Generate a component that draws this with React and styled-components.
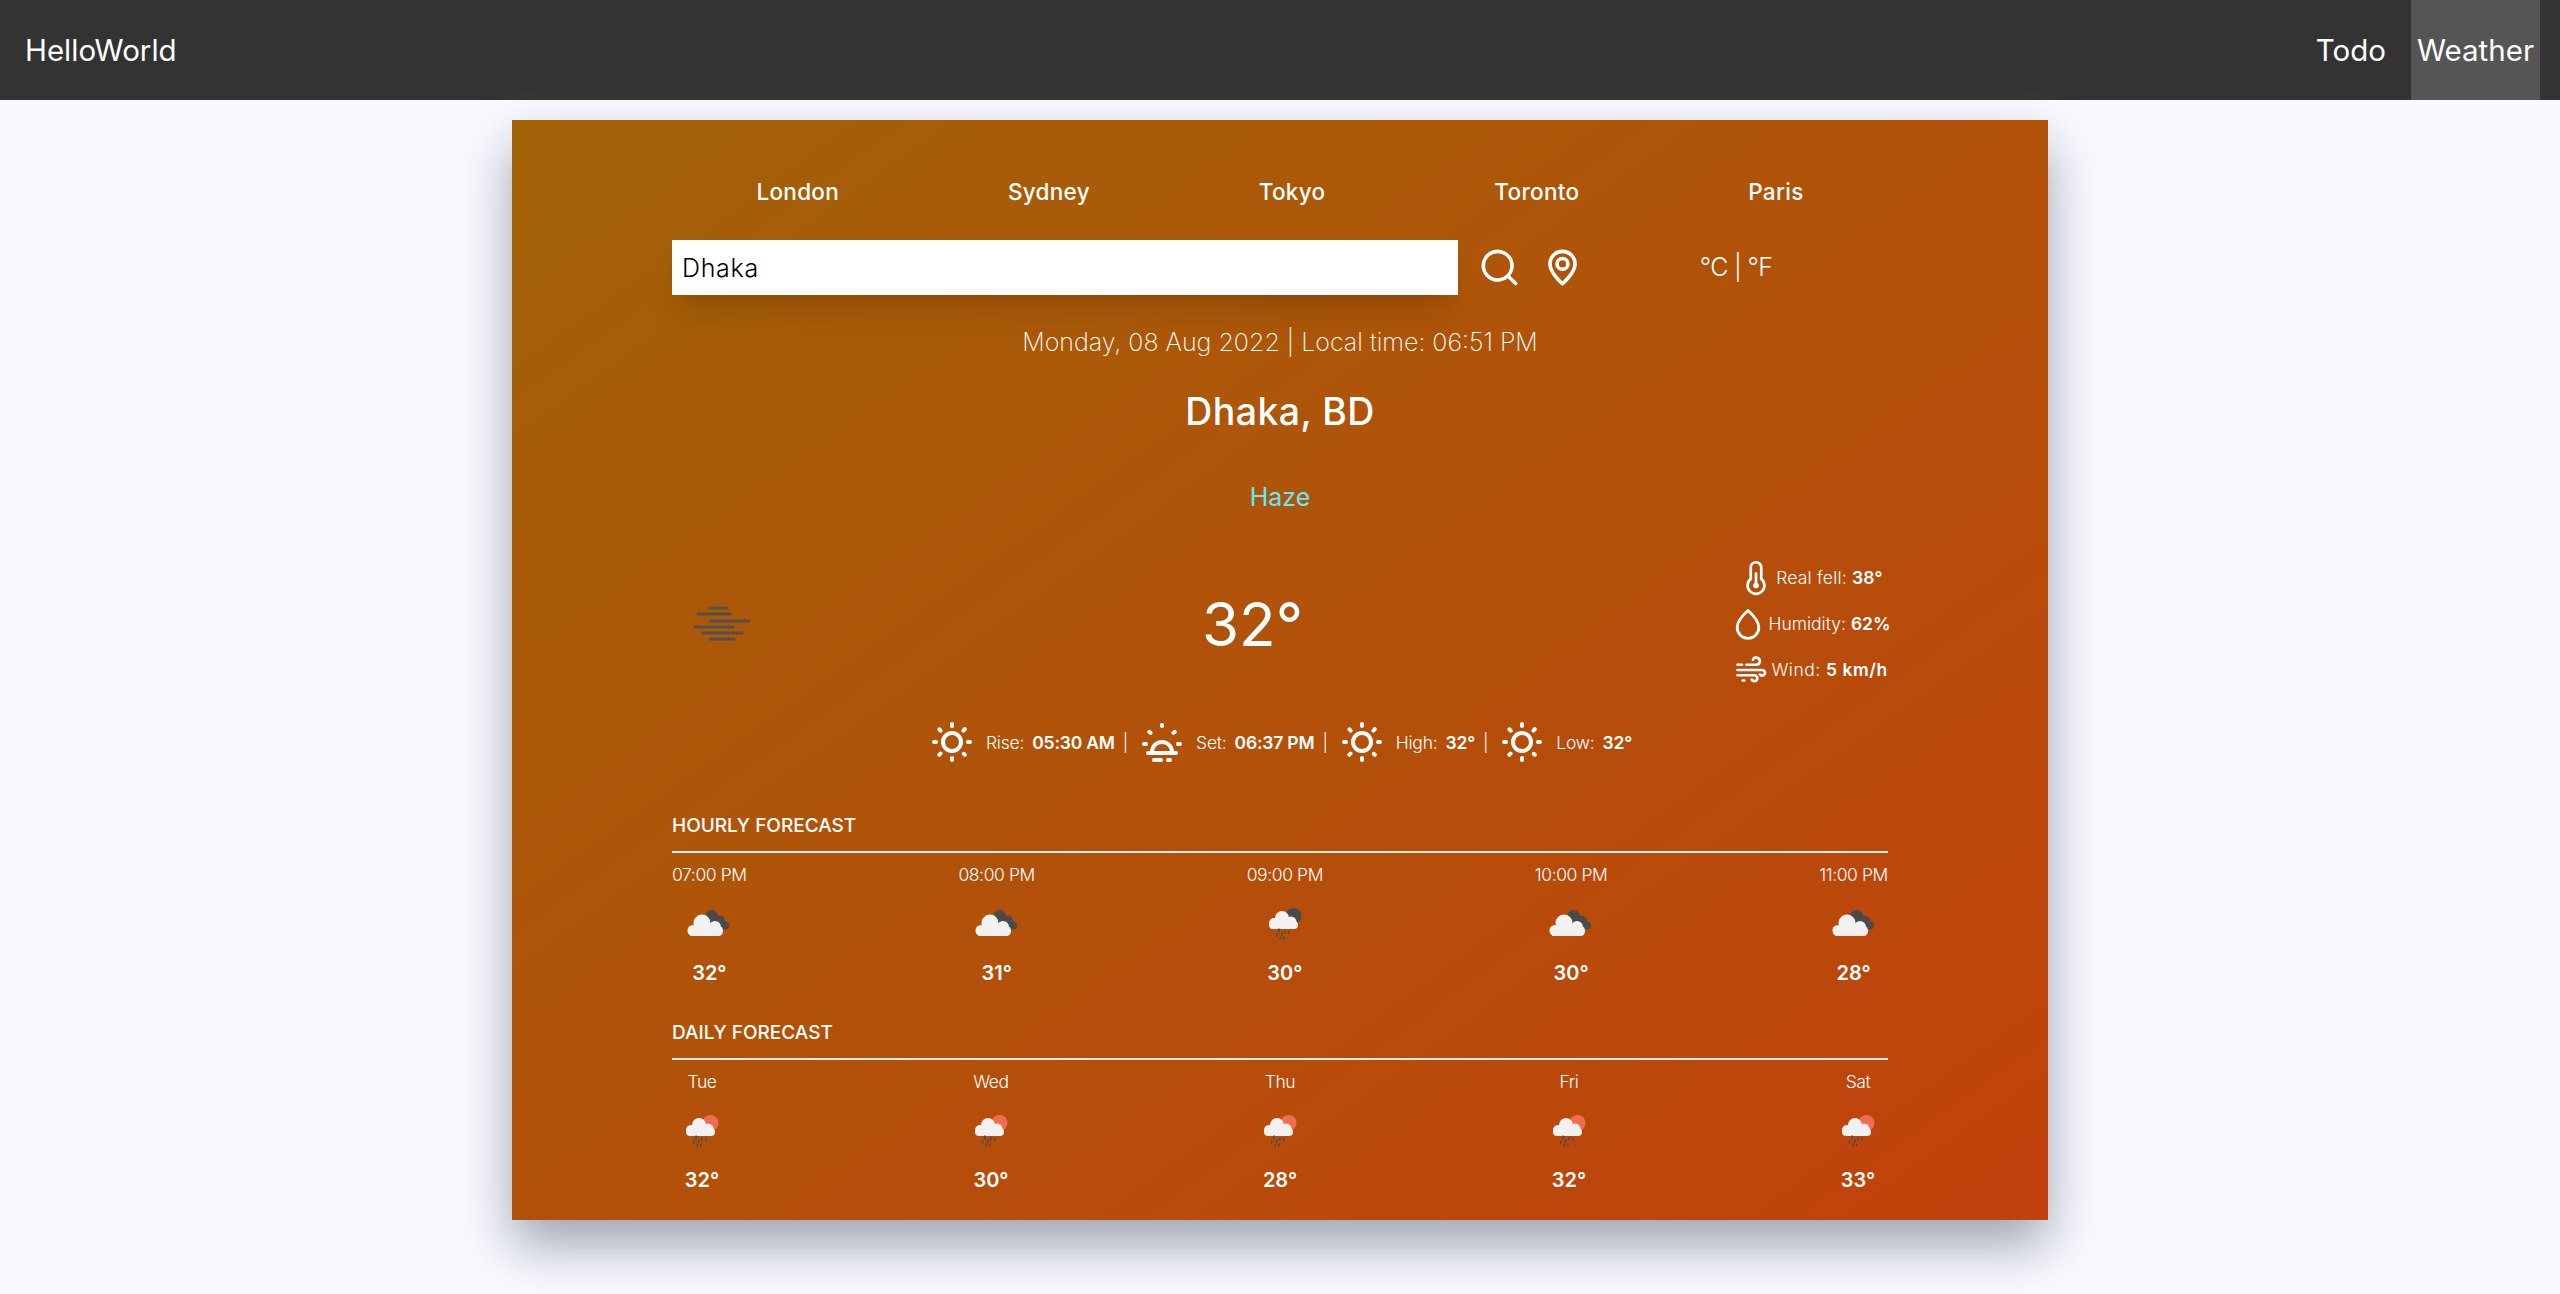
import styled, { createGlobalStyle } from "styled-components";

const GlobalStyle = createGlobalStyle`
  * { box-sizing: border-box; }
  html, body, #root { margin: 0; padding: 0; min-height: 100vh; }
  body {
    background: #f9faff;
    font-family: "Inter", "Open Sans", sans-serif;
    color: #fff;
  }
  #root { overflow: visible; display: flow-root; }
`;

const hourly = [
  { label: "07:00 PM", temp: "32°", icon: "cloud" },
  { label: "08:00 PM", temp: "31°", icon: "cloud" },
  { label: "09:00 PM", temp: "30°", icon: "rain" },
  { label: "10:00 PM", temp: "30°", icon: "cloud" },
  { label: "11:00 PM", temp: "28°", icon: "cloud" },
];

const daily = [
  { label: "Tue", temp: "32°", icon: "sun" },
  { label: "Wed", temp: "30°", icon: "sun" },
  { label: "Thu", temp: "28°", icon: "sun" },
  { label: "Fri", temp: "32°", icon: "sun" },
  { label: "Sat", temp: "33°", icon: "sun" },
];

const cities = ["London", "Sydney", "Tokyo", "Toronto", "Paris"];

// outline icons, all on a 24 grid
const SearchIcon = () => (
  <svg width="43" height="43" viewBox="0 0 24 24" fill="#fff">
    <path d="M21.71,20.29,18,16.61A9,9,0,1,0,16.61,18l3.68,3.68a1,1,0,0,0,1.42,0A1,1,0,0,0,21.71,20.29ZM11,18a7,7,0,1,1,7-7A7,7,0,0,1,11,18Z" />
  </svg>
);

const LocationIcon = () => (
  <svg width="43" height="43" viewBox="0 0 24 24" fill="#fff">
    <path d="M12,2a8,8,0,0,0-8,8c0,5.4,7.05,11.5,7.35,11.76a1,1,0,0,0,1.3,0C13,21.5,20,15.4,20,10A8,8,0,0,0,12,2Zm0,17.65c-2.13-2-6-6.31-6-9.65a6,6,0,0,1,12,0C18,13.34,14.13,17.66,12,19.65ZM12,6a4,4,0,1,0,4,4A4,4,0,0,0,12,6Zm0,6a2,2,0,1,1,2-2A2,2,0,0,1,12,12Z" />
  </svg>
);

const SunIcon = () => (
  <svg width="48" height="48" viewBox="0 0 24 24" fill="#fff">
    <path d="M5.64,17l-.71.71a1,1,0,0,0,0,1.41,1,1,0,0,0,1.41,0l.71-.71A1,1,0,0,0,5.64,17ZM5,12a1,1,0,0,0-1-1H3a1,1,0,0,0,0,2H4A1,1,0,0,0,5,12Zm7-7a1,1,0,0,0,1-1V3a1,1,0,0,0-2,0V4A1,1,0,0,0,12,5ZM5.64,7.05a1,1,0,0,0,.7.29,1,1,0,0,0,.71-.29,1,1,0,0,0,0-1.41l-.71-.71A1,1,0,0,0,4.93,6.34Zm12,.29a1,1,0,0,0,.7-.29l.71-.71a1,1,0,1,0-1.41-1.41L17,5.64a1,1,0,0,0,0,1.41A1,1,0,0,0,17.66,7.34ZM21,11H20a1,1,0,0,0,0,2h1a1,1,0,0,0,0-2Zm-9,8a1,1,0,0,0-1,1v1a1,1,0,0,0,2,0V20A1,1,0,0,0,12,19ZM18.36,17A1,1,0,0,0,17,18.36l.71.71a1,1,0,0,0,1.41,0,1,1,0,0,0,0-1.41ZM12,6.5A5.5,5.5,0,1,0,17.5,12,5.51,5.51,0,0,0,12,6.5Zm0,9A3.5,3.5,0,1,1,15.5,12,3.5,3.5,0,0,1,12,15.5Z" />
  </svg>
);

const SunsetIcon = () => (
  <svg width="48" height="48" viewBox="0 0 24 24" fill="none" stroke="#fff" strokeWidth="2" strokeLinecap="round">
    <path d="M7 17a5 5 0 0 1 10 0" />
    <path d="M5 17.5h14" />
    <path d="M8 21h3.5M15 21h1" />
    <path d="M12 3.5v.5M3 13h1M20 13h1M5.6 6.9l.7.5M18.4 6.9l-.7.5" />
  </svg>
);

const ThermometerIcon = () => (
  <svg width="36" height="36" viewBox="0 0 24 24" fill="none" stroke="#fff" strokeWidth="1.8" strokeLinecap="round">
    <path d="M8.5 5a3.5 3.5 0 0 1 7 0v7.6a5.6 5.6 0 1 1-7 0Z" />
    <path d="M12 9v8" />
    <circle cx="12" cy="17" r="1" fill="#fff" />
  </svg>
);

const TearIcon = () => (
  <svg width="36" height="36" viewBox="0 0 24 24" fill="none" stroke="#fff" strokeWidth="1.9" strokeLinejoin="round">
    <path d="M12 3C8.6 6 4.8 10 4.8 14.4a7.2 7.2 0 0 0 14.4 0C19.2 10 15.4 6 12 3Z" />
  </svg>
);

const WindIcon = () => (
  <svg width="36" height="36" viewBox="0 0 24 24" fill="none" stroke="#fff" strokeWidth="1.8" strokeLinecap="round">
    <path d="M9 8.5h6.5a2.4 2.4 0 1 0-2.2-3.4" />
    <path d="M3 8.5h3" />
    <path d="M3 12h16.5a1.9 1.9 0 1 1-1.6 3" />
    <path d="M3 15.5h11.5a2 2 0 1 1-2 3" />
    <path d="M6.5 19h1" />
  </svg>
);

const FogIcon = () => (
  <svg width="100" height="100" viewBox="0 0 100 100" stroke="#53504c" strokeWidth="3" strokeLinecap="round">
    <path d="M38 34h17M26 40h32M38 47h39M23 53h38M31 59h39M38 65h24" />
  </svg>
);

// openweather style pictures, 60px box
const CloudBody = () => (
  <g fill="#f1f1f1">
    <circle cx="23" cy="30" r="8.5" />
    <circle cx="36" cy="34" r="6" />
    <circle cx="14" cy="37.5" r="5.5" />
    <rect x="9" y="33" width="35" height="10" rx="4.5" />
  </g>
);

const CloudyIcon = () => (
  <svg width="60" height="60" viewBox="0 0 60 60">
    <g fill="#4a4a4a">
      <circle cx="32.7" cy="23.5" r="6.5" />
      <circle cx="41" cy="27.7" r="5" />
      <circle cx="46" cy="32.5" r="4" />
      <circle cx="36" cy="30" r="6" />
    </g>
    <CloudBody />
  </svg>
);

const RainIcon = ({ behind }) => (
  <svg width="60" height="60" viewBox="0 0 60 60">
    <circle cx="38.5" cy="23" r="8" fill={behind} />
    <g fill="#f1f1f1">
      <circle cx="27" cy="25" r="7" />
      <circle cx="36" cy="29" r="5.5" />
      <circle cx="19" cy="30" r="5" />
      <rect x="14" y="28" width="29" height="8" rx="4" />
    </g>
    <path
      d="M24 36v3M22 41l-.6 2M27 40l-.6 2.5M30 38l-.4 2M25.5 44.5l-.3 1.5M29 44l-.3 2M34 38.5l-.3 1.5"
      stroke="#4a4a4a"
      strokeWidth="1.5"
      strokeLinecap="round"
    />
  </svg>
);

const ForecastIcon = ({ kind }) => {
  if (kind === "cloud") return <CloudyIcon />;
  if (kind === "rain") return <RainIcon behind="#4a4a4a" />;
  return <RainIcon behind="#ee6e4f" />;
};

const Forecast = ({ title, items }) => (
  <section>
    <SectionTitle>{title}</SectionTitle>
    <Rule />
    <ForecastRow>
      {items.map((item) => (
        <ForecastItem key={item.label}>
          <ItemLabel>{item.label}</ItemLabel>
          <ItemIcon>
            <ForecastIcon kind={item.icon} />
          </ItemIcon>
          <ItemTemp>{item.temp}</ItemTemp>
        </ForecastItem>
      ))}
    </ForecastRow>
  </section>
);

function App() {
  return (
    <>
      <GlobalStyle />
      <Nav>
        <Brand>HelloWorld</Brand>
        <NavLinks>
          <NavLink>Todo</NavLink>
          <NavLink $active>Weather</NavLink>
        </NavLinks>
      </Nav>

      <Card>
        <Cities>
          {cities.map((city) => (
            <City key={city}>{city}</City>
          ))}
        </Cities>

        <SearchRow>
          <SearchGroup>
            <SearchInput defaultValue="Dhaka" />
            <IconButton>
              <SearchIcon />
            </IconButton>
            <IconButton>
              <LocationIcon />
            </IconButton>
          </SearchGroup>
          <Units>°C | °F</Units>
        </SearchRow>

        <DateLine>Monday, 08 Aug 2022 | Local time: 06:51 PM</DateLine>
        <Place>Dhaka, BD</Place>
        <Condition>Haze</Condition>

        <MainRow>
          <FogBox>
            <FogIcon />
          </FogBox>
          <BigTemp>32°</BigTemp>
          <Details>
            <DetailRow $spacing="0.2px">
              <ThermometerIcon />
              <span>
                Real fell: <b>38°</b>
              </span>
            </DetailRow>
            <DetailRow>
              <TearIcon />
              <span>
                Humidity: <b>62%</b>
              </span>
            </DetailRow>
            <DetailRow $spacing="0.5px">
              <WindIcon />
              <span>
                Wind: <b>5 km/h</b>
              </span>
            </DetailRow>
          </Details>
        </MainRow>

        <SunRow>
          <SunIcon />
          <SunLabel>Rise:</SunLabel>
          <SunValue>05:30 AM</SunValue>
          <Divider>|</Divider>
          <SunsetIcon />
          <SunLabel>Set:</SunLabel>
          <SunValue>06:37 PM</SunValue>
          <Divider>|</Divider>
          <SunIcon />
          <SunLabel>High:</SunLabel>
          <SunValue>32°</SunValue>
          <Divider>|</Divider>
          <SunIcon />
          <SunLabel>Low:</SunLabel>
          <SunValue>32°</SunValue>
        </SunRow>

        <Forecast title="Hourly forecast" items={hourly} />
        <Forecast title="Daily forecast" items={daily} />
      </Card>
    </>
  );
}

export default App;

const Nav = styled.nav`
  height: 100px;
  background: #333;
  display: flex;
  justify-content: space-between;
  padding: 0 20px 0 25px;
`;

const Brand = styled.div`
  font-size: 29.5px;
  line-height: 100px;
`;

const NavLinks = styled.div`
  display: flex;
  gap: 19px;
`;

const NavLink = styled.a`
  font-size: 29.5px;
  line-height: 100px;
  padding: 0 6px;
  background: ${(props) => (props.$active ? "#555" : "transparent")};
`;

const Card = styled.main`
  width: 1536px;
  height: 1100px;
  margin: 20px auto 0;
  padding: 54px 160px 0;
  background: linear-gradient(to bottom right, #a16207, #c2410c);
  box-shadow: 0 25px 50px 0 #9ca3af;
`;

const Cities = styled.div`
  display: flex;
  justify-content: space-around;
  height: 34px;
  align-items: center;
`;

const City = styled.button`
  border: 0;
  background: none;
  padding: 0;
  color: #fff;
  font: 500 22.5px "Inter", sans-serif;
  letter-spacing: 0.3px;
`;

const SearchRow = styled.div`
  display: flex;
  margin-top: 32px;
  height: 55px;
`;

const SearchGroup = styled.div`
  width: 912px;
  display: flex;
  align-items: center;
  gap: 20px;
`;

const SearchInput = styled.input`
  flex: 1;
  min-width: 0;
  height: 55px;
  border: 0;
  outline: 0;
  padding: 0 10px;
  font: 300 25px "Inter", sans-serif;
  letter-spacing: 0.7px;
  color: #000;
  box-shadow: 0 25px 31px -6px rgba(0, 0, 0, 0.1), 0 10px 12px -8px rgba(0, 0, 0, 0.1);
`;

const IconButton = styled.span`
  display: flex;
  width: 43px;
  height: 43px;
`;

const Units = styled.div`
  flex: 1;
  text-align: center;
  font-size: 25px;
  font-weight: 300;
  line-height: 55px;
  letter-spacing: -0.7px;
`;

const DateLine = styled.p`
  margin: 28px 0 0;
  text-align: center;
  font-size: 25px;
  font-weight: 200;
  line-height: 38px;
`;

const Place = styled.p`
  margin: 23px 0 0;
  text-align: center;
  font-size: 37.5px;
  font-weight: 500;
  line-height: 56px;
  letter-spacing: 0.4px;
`;

const Condition = styled.p`
  margin: 38px 0 0;
  text-align: center;
  font-size: 25px;
  line-height: 38px;
  color: #67e8f9;
`;

const MainRow = styled.div`
  display: flex;
  justify-content: space-between;
  align-items: center;
  margin-top: 38px;
  height: 139px;
`;

const FogBox = styled.div`
  width: 100px;
  height: 100px;
`;

const BigTemp = styled.div`
  font-size: 60px;
  line-height: 1;
`;

const Details = styled.div`
  width: 155px;
  display: flex;
  flex-direction: column;
  align-items: center;
  font-size: 17.5px;
  font-weight: 300;

  b {
    font-weight: 600;
  }
`;

const DetailRow = styled.div`
  display: flex;
  align-items: center;
  gap: 2px;
  height: 46px;
  white-space: nowrap;
  letter-spacing: ${(props) => props.$spacing || "0"};
`;

const SunRow = styled.div`
  display: flex;
  justify-content: center;
  align-items: center;
  margin-top: 25px;
  height: 48px;
  font-size: 17.5px;
  letter-spacing: -0.2px;
`;

const SunLabel = styled.span`
  font-weight: 300;
  margin: 0 8px 0 10px;
`;

const SunValue = styled.span`
  font-weight: 600;
`;

const Divider = styled.span`
  font-weight: 300;
  margin: 0 10px 0 8px;
`;

const SectionTitle = styled.p`
  margin: 45px 0 0;
  font-size: 19px;
  font-weight: 500;
  line-height: 30px;
  text-transform: uppercase;

  section + section & {
    margin-top: 30px;
  }
`;

const Rule = styled.hr`
  margin: 10px 0 0;
  border: 0;
  height: 2px;
  background: #f4f1ee;
`;

const ForecastRow = styled.div`
  display: flex;
  justify-content: space-between;
  margin-top: 9px;
`;

const ForecastItem = styled.div`
  display: flex;
  flex-direction: column;
  align-items: center;
`;

const ItemLabel = styled.span`
  font-size: 17.5px;
  font-weight: 300;
  line-height: 26px;
  letter-spacing: -0.4px;
`;

const ItemIcon = styled.span`
  display: flex;
  margin: 5px 0;
`;

const ItemTemp = styled.span`
  font-size: 20px;
  font-weight: 600;
  line-height: 30px;
`;
